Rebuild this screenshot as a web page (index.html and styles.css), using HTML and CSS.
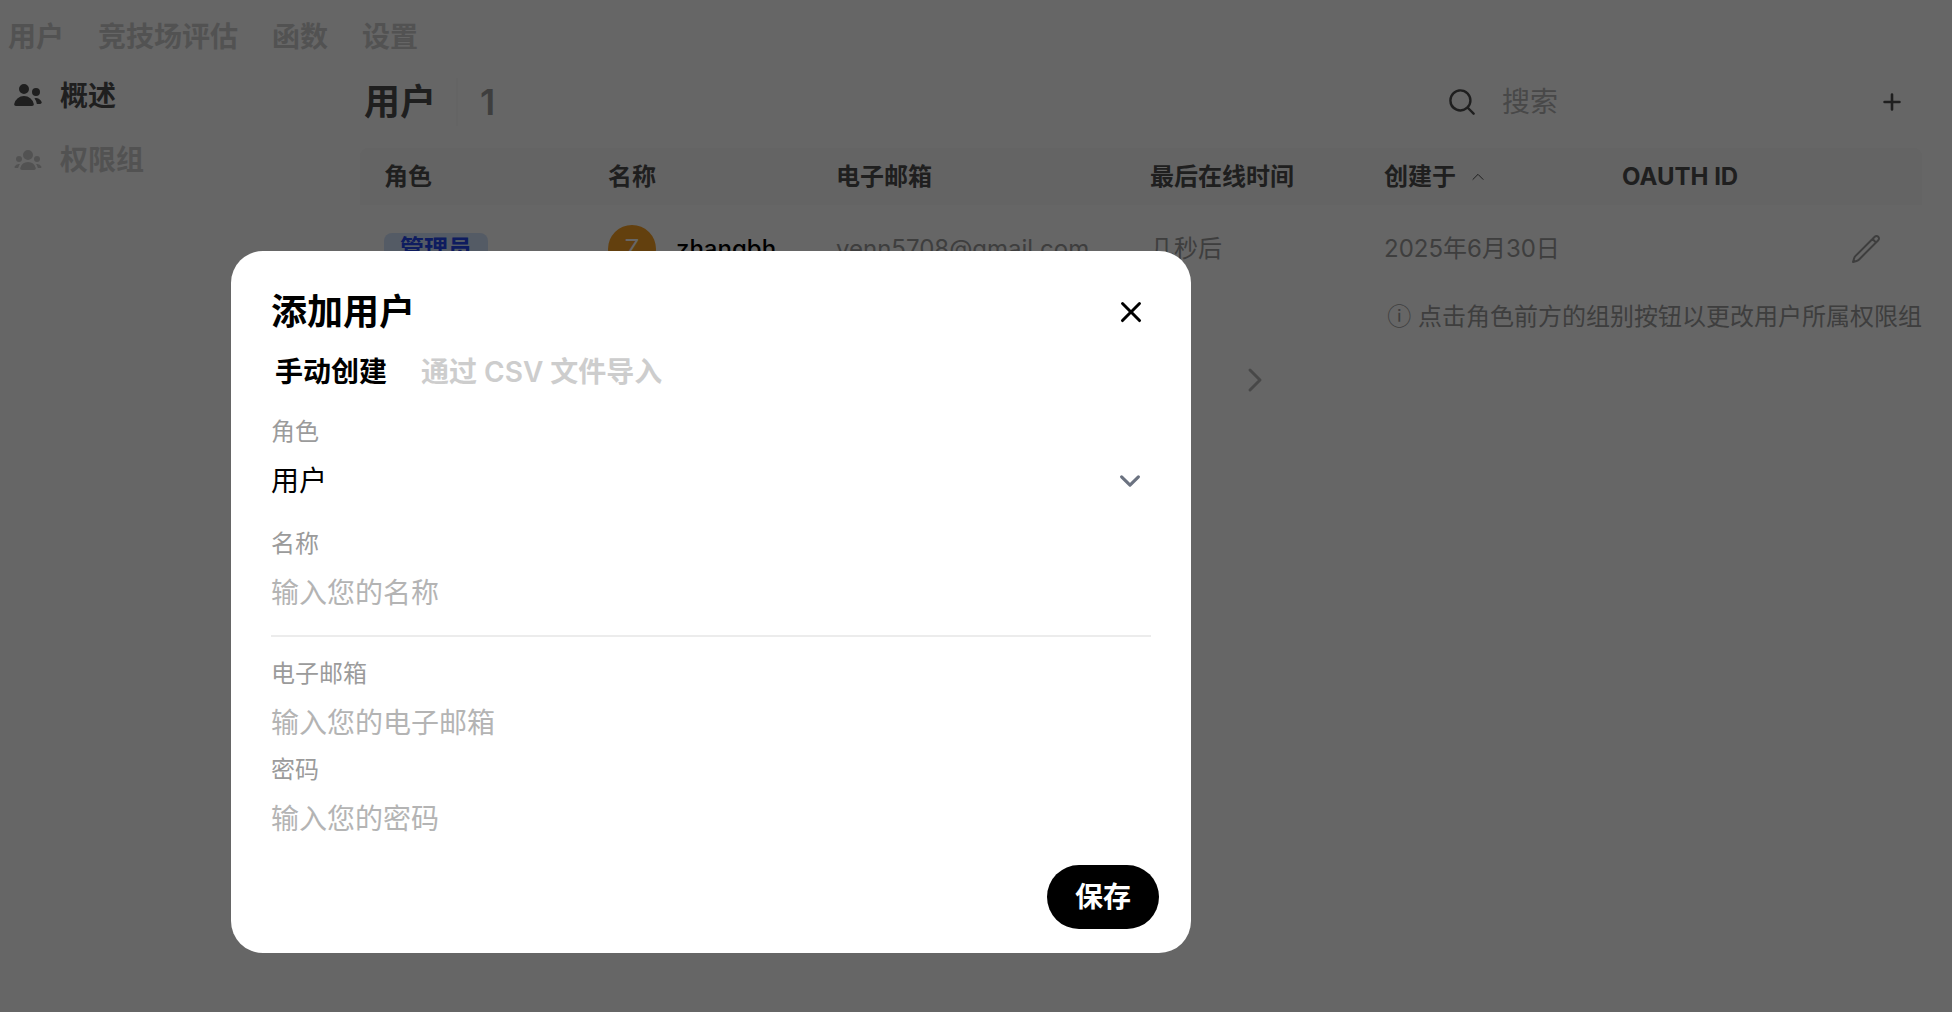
FILE: index.html
```html
<!DOCTYPE html>
<html lang="zh-CN">

<head>
    <meta charset="UTF-8">
    <meta name="viewport" content="width=device-width, initial-scale=1.0">
    <title>用户</title>
    <link rel="stylesheet" href="styles.css">
</head>

<body>
    <nav class="top-nav">
        <a href="#">用户</a>
        <a href="#">竞技场评估</a>
        <a href="#">函数</a>
        <a href="#">设置</a>
    </nav>

    <div class="layout">
        <aside class="side-nav">
            <a href="#" class="active">
                <svg class="icon" viewBox="0 0 16 16" fill="currentColor">
                    <path d="M8.5 4.5a2.5 2.5 0 1 1-5 0 2.5 2.5 0 0 1 5 0ZM10.9 12.006c.11.542-.348.994-.9.994H2c-.553 0-1.01-.452-.902-.994a5.002 5.002 0 0 1 9.803 0ZM14.002 12h-1.59a2.556 2.556 0 0 0-.04-.29 6.476 6.476 0 0 0-1.167-2.603 3.002 3.002 0 0 1 3.633 1.911c.18.522-.283.982-.836.982ZM12 8a2 2 0 1 0 0-4 2 2 0 0 0 0 4Z" />
                </svg>
                <span>概述</span>
            </a>
            <a href="#">
                <svg class="icon" viewBox="0 0 16 16" fill="currentColor">
                    <path d="M8 8a2.5 2.5 0 1 0 0-5 2.5 2.5 0 0 0 0 5ZM3.156 11.763c.16-.629.44-1.21.813-1.72a2.5 2.5 0 0 0-2.725 1.377c-.136.287.102.58.418.58h1.449c.01-.077.025-.156.045-.237ZM12.847 11.763c.02.08.036.16.046.237h1.446c.316 0 .554-.293.417-.579a2.5 2.5 0 0 0-2.722-1.378c.374.51.653 1.09.813 1.72ZM14 7.5a1.5 1.5 0 1 1-3 0 1.5 1.5 0 0 1 3 0ZM3.5 9a1.5 1.5 0 1 0 0-3 1.5 1.5 0 0 0 0 3ZM5 13c-.552 0-1.013-.455-.876-.99a4.002 4.002 0 0 1 7.753 0c.136.535-.324.99-.877.99H5Z" />
                </svg>
                <span>权限组</span>
            </a>
        </aside>

        <main class="content">
            <div class="content-head">
                <h1>用户</h1>
                <span class="count">1</span>
                <div class="search">
                    <svg class="icon" viewBox="0 0 20 20" fill="currentColor">
                        <path d="M9 3.5a5.5 5.5 0 1 0 0 11 5.5 5.5 0 0 0 0-11ZM2 9a7 7 0 1 1 12.452 4.391l3.328 3.329a.75.75 0 1 1-1.06 1.06l-3.329-3.328A7 7 0 0 1 2 9Z" />
                    </svg>
                    <input type="text" placeholder="搜索" aria-label="搜索">
                </div>
                <button type="button" class="icon-btn add" aria-label="添加用户">
                    <svg viewBox="0 0 16 16" fill="currentColor">
                        <path d="M8.75 3.75a.75.75 0 0 0-1.5 0v3.5h-3.5a.75.75 0 0 0 0 1.5h3.5v3.5a.75.75 0 0 0 1.5 0v-3.5h3.5a.75.75 0 0 0 0-1.5h-3.5v-3.5Z" />
                    </svg>
                </button>
            </div>

            <table class="users">
                <colgroup>
                    <col class="col-role">
                    <col class="col-name">
                    <col class="col-email">
                    <col class="col-active">
                    <col class="col-created">
                    <col class="col-oauth">
                    <col class="col-edit">
                </colgroup>
                <thead>
                    <tr>
                        <th>角色</th>
                        <th>名称</th>
                        <th>电子邮箱</th>
                        <th>最后在线时间</th>
                        <th>
                            <div class="sort">
                                创建于
                                <svg viewBox="0 0 24 24" fill="none" stroke="currentColor" stroke-width="1.5">
                                    <path d="m4 16 8-8 8 8" />
                                </svg>
                            </div>
                        </th>
                        <th>OAUTH ID</th>
                        <th></th>
                    </tr>
                </thead>
                <tbody>
                    <tr>
                        <td><button type="button" class="badge">管理员</button></td>
                        <td>
                            <div class="person">
                                <span class="avatar">Z</span>
                                <span class="name">zhangbh</span>
                            </div>
                        </td>
                        <td>venn5708@gmail.com</td>
                        <td>几秒后</td>
                        <td>2025年6月30日</td>
                        <td></td>
                        <td>
                            <button type="button" class="icon-btn edit" aria-label="编辑">
                                <svg viewBox="0 0 24 24" fill="none" stroke="currentColor" stroke-width="1.5" stroke-linecap="round" stroke-linejoin="round">
                                    <path d="m16.862 4.487 1.687-1.688a1.875 1.875 0 1 1 2.652 2.652L6.832 19.82a4.5 4.5 0 0 1-1.897 1.13l-2.685.8.8-2.685a4.5 4.5 0 0 1 1.13-1.897L16.863 4.487Zm0 0L19.5 7.125" />
                                </svg>
                            </button>
                        </td>
                    </tr>
                </tbody>
            </table>

            <p class="hint">ⓘ 点击角色前方的组别按钮以更改用户所属权限组</p>

            <div class="pager">
                <button type="button" class="icon-btn" aria-label="上一页">
                    <svg viewBox="0 0 32 32" fill="none" stroke="currentColor" stroke-width="3" stroke-linecap="round" stroke-linejoin="round">
                        <path d="M20 6 10 16l10 10" />
                    </svg>
                </button>
                <button type="button" class="icon-btn" aria-label="下一页">
                    <svg viewBox="0 0 32 32" fill="none" stroke="currentColor" stroke-width="3" stroke-linecap="round" stroke-linejoin="round">
                        <path d="m12 6 10 10-10 10" />
                    </svg>
                </button>
            </div>
        </main>
    </div>

    <div class="overlay">
        <form class="modal" role="dialog" aria-labelledby="modal-title">
            <div class="modal-head">
                <h2 id="modal-title">添加用户</h2>
                <button type="button" class="icon-btn close" aria-label="关闭">
                    <svg viewBox="0 0 20 20" fill="currentColor">
                        <path d="M6.28 5.22a.75.75 0 0 0-1.06 1.06L8.94 10l-3.72 3.72a.75.75 0 1 0 1.06 1.06L10 11.06l3.72 3.72a.75.75 0 1 0 1.06-1.06L11.06 10l3.72-3.72a.75.75 0 0 0-1.06-1.06L10 8.94 6.28 5.22Z" />
                    </svg>
                </button>
            </div>

            <div class="tabs">
                <button type="button" class="active">手动创建</button>
                <button type="button">通过 CSV 文件导入</button>
            </div>

            <div class="fields">
                <div class="field role">
                    <label for="role">角色</label>
                    <div class="select">
                        <select id="role">
                            <option>用户</option>
                            <option>管理员</option>
                        </select>
                        <svg viewBox="0 0 20 20" fill="none" stroke="currentColor" stroke-width="1.5" stroke-linecap="round" stroke-linejoin="round">
                            <path d="m6 8 4 4 4-4" />
                        </svg>
                    </div>
                </div>
                <div class="field">
                    <label for="name">名称</label>
                    <input type="text" id="name" placeholder="输入您的名称">
                </div>
                <hr>
                <div class="field email">
                    <label for="email">电子邮箱</label>
                    <input type="email" id="email" placeholder="输入您的电子邮箱">
                </div>
                <div class="field">
                    <label for="password">密码</label>
                    <input type="password" id="password" placeholder="输入您的密码">
                </div>
            </div>

            <div class="modal-foot">
                <button type="submit" class="save">保存</button>
            </div>
        </form>
    </div>
</body>

</html>
```
FILE: styles.css
```css
* {
    box-sizing: border-box;
    margin: 0;
    padding: 0;
}

body {
    background-color: #fff;
    color: #4e4e4e;
    font-family: Inter, "Noto Sans CJK SC", sans-serif;
    font-size: 28px;
    line-height: 42px;
}

a {
    color: inherit;
    text-decoration: none;
}

button,
input,
select {
    border: none;
    outline: none;
    background: transparent;
    color: inherit;
    font: inherit;
}

button {
    cursor: pointer;
}

svg {
    display: block;
    flex-shrink: 0;
}

.icon {
    width: 32px;
    height: 32px;
}

.icon-btn {
    display: flex;
}

.icon-btn svg {
    width: 32px;
    height: 32px;
}

/* top tabs */
.top-nav {
    display: flex;
    gap: 34px;
    padding: 16px 8px 14px;
    color: #cdcdcd;
    font-weight: 600;
}

.layout {
    display: flex;
}

/* left menu */
.side-nav {
    display: flex;
    flex-direction: column;
    flex-shrink: 0;
    gap: 16px;
    width: 360px;
    padding-left: 12px;
    color: #cdcdcd;
    font-weight: 600;
}

.side-nav a {
    display: flex;
    align-items: center;
    gap: 16px;
    height: 48px;
}

.side-nav .active {
    color: #4e4e4e;
}

/* user list */
.content {
    flex: 1;
    min-width: 0;
    padding-right: 30px;
}

.content-head {
    display: flex;
    align-items: center;
    height: 60px;
    margin-bottom: 16px;
    padding: 0 16px 0 4px;
}

.content-head h1,
.count {
    font-size: 36px;
    font-weight: 600;
}

.count {
    height: 48px;
    margin-left: 20px;
    padding-left: 22px;
    border-left: 2px solid #f9f9f9;
    color: #9b9b9b;
    line-height: 48px;
}

.search {
    display: flex;
    align-items: center;
    gap: 24px;
    width: 432px;
    margin-left: auto;
}

.search input {
    flex: 1;
    min-width: 0;
}

.search input::placeholder {
    color: #b4b4b4;
}

.add svg {
    width: 28px;
    height: 28px;
}

.users {
    width: 100%;
    table-layout: fixed;
    border-collapse: collapse;
    font-size: 24px;
    line-height: 32px;
    text-align: left;
    white-space: nowrap;
}

.col-role {
    width: 224px;
}

.col-name {
    width: 228px;
}

.col-email {
    width: 314px;
}

.col-active {
    width: 234px;
}

.col-created {
    width: 238px;
}

.users th,
.users td {
    padding: 12px 24px;
}

.users th {
    padding: 13px 24px 12px;
    background-color: #f9f9f9;
    font-weight: 700;
}

.users th:first-child {
    border-top-left-radius: 8px;
}

.users th:last-child {
    border-top-right-radius: 8px;
}

.users td {
    height: 87px;
    color: #9b9b9b;
}

.sort {
    display: flex;
    align-items: center;
    gap: 14px;
}

.sort svg {
    width: 16px;
    height: 16px;
}

.badge {
    display: block;
    padding: 0 16px;
    border-radius: 8px;
    background-color: #d3e3fc;
    color: #2546ee;
    font-weight: 700;
}

.person {
    display: flex;
    align-items: center;
    gap: 20px;
}

.avatar {
    width: 48px;
    border-radius: 50%;
    background-color: #f8a024;
    color: #fff;
    line-height: 48px;
    text-align: center;
}

.name {
    color: #000;
    font-weight: 500;
}

.edit {
    margin: 0 16px 0 auto;
}

.hint {
    padding-top: 9px;
    color: #9b9b9b;
    font-size: 24px;
    line-height: 32px;
    text-align: right;
}

.pager {
    display: flex;
    justify-content: center;
    gap: 194px;
    margin-top: 31px;
    color: #b4b4b4;
}

/* dialog */
.overlay {
    position: fixed;
    inset: 0;
    padding: 251px 231px 0;
    background-color: rgba(0, 0, 0, .6);
}

.modal {
    max-width: 960px;
    padding-top: 40px;
    border-radius: 32px;
    background-color: #fff;
    color: #000;
}

.modal-head {
    display: flex;
    align-items: center;
    justify-content: space-between;
    padding: 0 40px;
}

.modal-head h2 {
    font-size: 36px;
    font-weight: 600;
}

.close svg {
    width: 40px;
    height: 40px;
}

.tabs {
    display: flex;
    gap: 34px;
    margin: 18px 0 23px;
    padding: 0 44px;
}

.tabs button {
    color: #cdcdcd;
    font-weight: 600;
}

.tabs .active {
    color: #000;
}

.fields {
    padding: 0 40px;
}

.field {
    display: flex;
    flex-direction: column;
    gap: 12px;
}

.field label {
    color: #9b9b9b;
    font-size: 24px;
    line-height: 32px;
}

.field input,
.field select {
    width: 100%;
    height: 42px;
}

.field input::placeholder {
    color: #b4b4b4;
}

.field.role {
    margin-bottom: 26px;
}

.field.email {
    margin-bottom: 10px;
}

.select {
    display: grid;
    align-items: center;
}

.select select,
.select svg {
    grid-area: 1 / 1;
}

.select select {
    appearance: none;
}

.select svg {
    justify-self: end;
    width: 42px;
    height: 42px;
    color: #6b7280;
    pointer-events: none;
}

.fields hr {
    height: 2px;
    margin: 21px 0;
    border: none;
    background-color: #ececec;
}

.modal-foot {
    display: flex;
    justify-content: flex-end;
    padding: 25px 32px 24px;
}

.save {
    padding: 11px 28px;
    border-radius: 32px;
    background-color: #000;
    color: #fff;
    font-weight: 600;
}
```
